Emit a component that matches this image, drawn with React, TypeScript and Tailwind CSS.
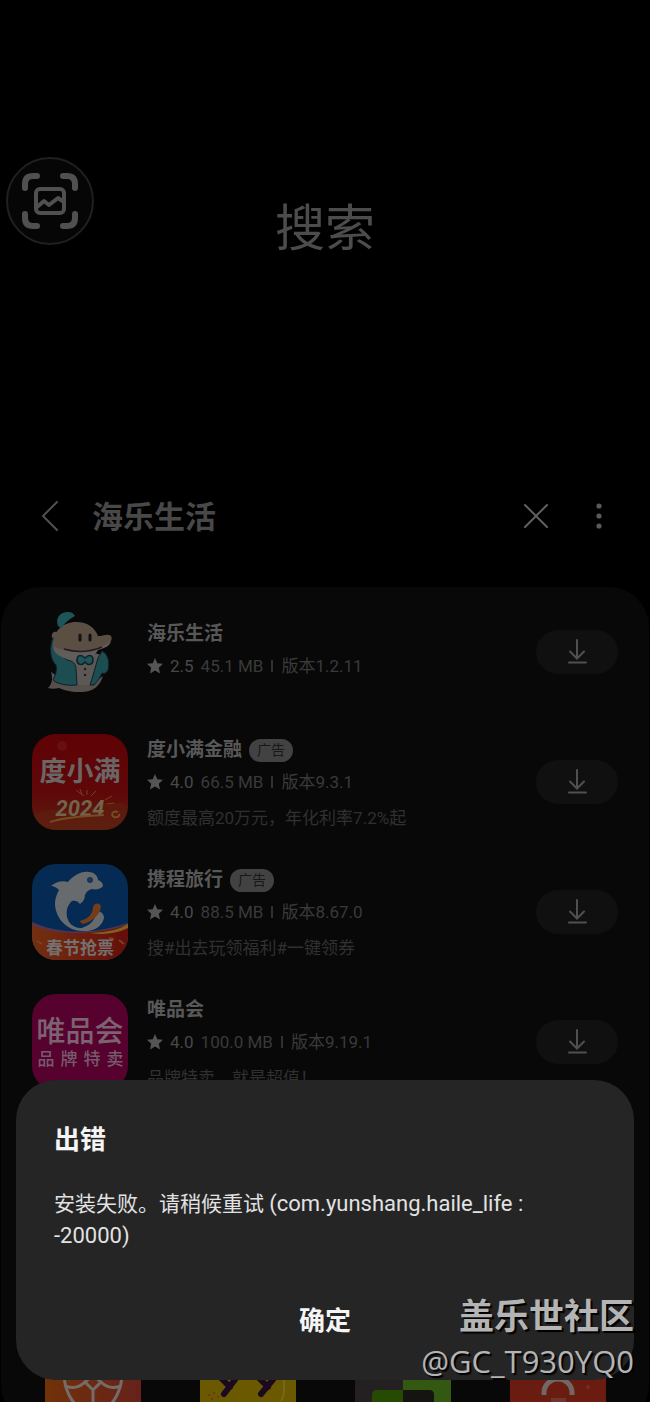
import { useState } from 'react'

type AppItem = {
  id: string
  name: string
  ad?: boolean
  rating: string
  size: string
  version: string
  desc?: string
  icon: () => React.ReactElement
}

const APPS: AppItem[] = [
  {
    id: 'haile',
    name: '海乐生活',
    rating: '2.5',
    size: '45.1 MB',
    version: '版本1.2.11',
    icon: HaileIcon,
  },
  {
    id: 'duxiaoman',
    name: '度小满金融',
    ad: true,
    rating: '4.0',
    size: '66.5 MB',
    version: '版本9.3.1',
    desc: '额度最高20万元，年化利率7.2%起',
    icon: DuxiaomanIcon,
  },
  {
    id: 'ctrip',
    name: '携程旅行',
    ad: true,
    rating: '4.0',
    size: '88.5 MB',
    version: '版本8.67.0',
    desc: '搜#出去玩领福利#一键领券',
    icon: CtripIcon,
  },
  {
    id: 'vip',
    name: '唯品会',
    rating: '4.0',
    size: '100.0 MB',
    version: '版本9.19.1',
    desc: '品牌特卖，就是超值！',
    icon: VipIcon,
  },
]

function HaileIcon() {
  return (
    <svg viewBox="0 0 96 96" className="size-24" aria-hidden="true">
      <path d="M16 84c4-4 5-9 3-16 5 3 9 6 13 8l30 2 9-6c-3 11-12 17-24 16-9 0-15-2-20-4-4 1-8 1-11 0z" fill="#55504b" />
      <path d="M34 42c-3 14-2 34 8 39h16c8-6 12-18 12-30z" fill="#5c5856" />
      <path d="M21 34c3-2 6-1 8 2-1 10 1 17 6 20 6 1 9 4 9 9l1 16c-10 1-20-1-24-5 3-5 4-11 3-15-6-5-7-18-3-27z" fill="#1c4d50" stroke="#0d1f28" strokeWidth="1" />
      <path d="M70 47c6 3 8 11 6 19-1 3-4 4-6 3-2 5-5 9-8 12H58c3-9 5-17 8-27z" fill="#1c4d50" stroke="#0d1f28" strokeWidth="1" />
      <path d="M21 41c0-14 10-23 23-23 12 0 19 6 22 14 5 0 10-3 13 0 3 5-4 10-13 13-3 7-10 10-20 10-14 0-25-4-25-14z" fill="#5b4f43" />
      <path d="M21 42c8 5 26 7 37 4 8-2 16-4 21-9-1 5-6 7-13 9-4 7-10 10-19 10-14 0-25-4-26-14z" fill="#605d5b" />
      <path d="M32 45c13 4 26 3 38-2" fill="none" stroke="#221b22" strokeWidth="1.6" />
      <path d="M20 34c-1-5 2-7 4-6s3 3 2 5z" fill="#5a5047" />
      <path d="M26 22c-3-8 2-14 10-14 4 0 6 2 7 4-6 3-10 7-14 12z" fill="#1d5558" />
      <path d="M48 31v5M58 31v5" stroke="#131118" strokeWidth="3" strokeLinecap="round" />
      <path d="M53 54c-4-4-8-3-8 2s5 6 8 2c3 4 8 3 8-2s-4-6-8-2z" fill="#205558" stroke="#10212a" strokeWidth="1.5" />
      <circle cx="53" cy="65" r="1.2" fill="#27161c" />
      <circle cx="53" cy="71" r="1.2" fill="#27161c" />
    </svg>
  )
}

function DuxiaomanIcon() {
  return (
    <svg viewBox="0 0 96 96" className="size-24 rounded-3xl" aria-hidden="true">
      <defs>
        <linearGradient id="dxm" x1="0" y1="0" x2="0" y2="1">
          <stop offset="0" stopColor="#5f0205" />
          <stop offset="0.6" stopColor="#5f0709" />
          <stop offset="1" stopColor="#59200f" />
        </linearGradient>
      </defs>
      <rect width="96" height="96" fill="url(#dxm)" />
      <circle cx="30" cy="12" r="5" fill="#661010" />
      <path d="M0 82c20-12 30-2 48-6s30-12 48-4v24H0z" fill="#60200f" opacity=".5" />
      <path d="M52 62l-8-6M50 61l-2-6M55 61v-5M59 62l5-5M73 66l7-4M75 70l7-1" stroke="#744022" strokeWidth="1" />
      <text x="48" y="47" textAnchor="middle" fontSize="27" fontWeight="700" fill="#6a6666">度小满</text>
      <text x="48" y="82" textAnchor="middle" fontSize="22" fontWeight="700" fontStyle="italic" fill="#72644a">2024</text>
      <path d="M18 88c18-6 38-6 54-7m14-3c-5-2-8 3-4 5 3 1 6-1 5-3" fill="none" stroke="#754c24" strokeWidth="2" />
    </svg>
  )
}

function CtripIcon() {
  return (
    <svg viewBox="0 0 96 96" className="size-24 rounded-3xl" aria-hidden="true">
      <defs>
        <linearGradient id="ctrip-base" x1="0" y1="0" x2="1" y2="0">
          <stop offset="0" stopColor="#733010" />
          <stop offset="1" stopColor="#650d0a" />
        </linearGradient>
      </defs>
      <rect width="96" height="96" fill="#052b55" />
      <path d="M0 58c24 11 58 14 96 1v37H0z" fill="#513454" />
      <path d="M0 61c26 11 63 10 96 0v35H0z" fill="url(#ctrip-base)" />
      <path d="M58 69c20-1 30-4 38-9v4c-12 6-25 7-38 5z" fill="#80601b" />
      {/* dolphin, tail curling round below the fin */}
      <path d="M19 22c5-4 11-6 17-4 5-6 13-11 21-10 5 0 9 4 9 8 3 1 5 3 5 6-2 3-7 4-11 3-4 1-6 3-7 6 0 4-2 7-5 9-2-3-5-4-8-3-6 5-7 14-3 21 3 4 7 6 12 6 9-2 14-8 16-16 4-1 7 2 7 6-2 9-11 14-22 13-14 0-26-12-27-26 0-7 2-11 4-15-2-2-5-4-8-4z" fill="#686b6e" />
      <path d="M61 43c2-5 8-4 8 0-1 8-9 15-18 17-2-1-3-2-3-3 8-2 13-7 13-14z" fill="#743c18" />
      <path d="M42 44c-3 9 2 17 10 20-9-1-15-11-10-20z" fill="#052b55" />
      <circle cx="58" cy="16" r="3" fill="#183456" />
      <path d="M77 74l5 1M87 76l5 4M10 80l-5-3" stroke="#754424" strokeWidth="2" />
      <text x="48" y="90" textAnchor="middle" fontSize="17" fontWeight="700" fill="#747070">春节抢票</text>
    </svg>
  )
}

function VipIcon() {
  return (
    <svg viewBox="0 0 96 96" className="size-24 rounded-3xl" aria-hidden="true">
      <rect width="96" height="96" fill="#57012f" />
      <text x="48" y="48" textAnchor="middle" fontSize="29" fontWeight="500" fill="#7b6372">唯品会</text>
      {['品', '牌', '特', '卖'].map((c, i) => (
        <text key={c} x={14 + i * 23} y="71" textAnchor="middle" fontSize="17" fontWeight="500" fill="#765b6c">
          {c}
        </text>
      ))}
    </svg>
  )
}

// row of suggested games, only their lower part shows below the dialog
const SUGGESTED = [
  <svg key="sport" viewBox="0 0 96 96" className="size-24" aria-hidden="true">
    <defs>
      <linearGradient id="sport">
        <stop offset="0" stopColor="#713108" />
        <stop offset="1" stopColor="#65221b" />
      </linearGradient>
    </defs>
    <rect width="96" height="96" fill="url(#sport)" />
    <g fill="none" stroke="#756c69" strokeWidth="3">
      <path d="M19 44c0 9 2 16 5 22 5 10 13 17 24 18 11-1 19-8 24-18 3-6 5-13 5-22" />
      <path d="M20 57c8 3 15 1 20-4M76 57c-8 3-15 1-20-4M40 53l8-7 8 7-8 8zM48 61v24" />
    </g>
  </svg>,
  <svg key="yy" viewBox="0 0 96 96" className="size-24" aria-hidden="true">
    <rect width="96" height="96" fill="#6a5901" />
    <path d="M84 48v14c0 4-1 7-3 10" stroke="#786914" strokeWidth="2" fill="none" />
    <path d="M20 48l10 10M37 48L24 65M58 48l10 10M75 48L61 65" stroke="#1b0920" strokeWidth="6" strokeLinecap="round" />
    <path d="M8 66h2M13 64h2M11 70h2M17 68h2" stroke="#70380c" strokeWidth="2" />
  </svg>,
  <svg key="blocks" viewBox="0 0 96 96" className="size-24" aria-hidden="true">
    <rect width="96" height="96" fill="#242022" />
    <rect x="48" width="48" height="96" fill="#335811" />
    <path d="M48 61H22q-5 0-5 5v30h31z" fill="#264a02" />
    <path d="M48 61h26q5 0 5 5v30H48z" fill="#151410" />
  </svg>,
  <svg key="shop" viewBox="0 0 96 96" className="size-24" aria-hidden="true">
    <rect width="96" height="96" fill="#6a1c10" />
    <path d="M34 66v-2a14 14 0 0 1 28 0v2" fill="none" stroke="#716765" strokeWidth="5" />
    <rect x="41" y="69" width="15" height="20" fill="#6d3630" />
    <circle cx="78" cy="58" r="2" fill="#75301a" />
  </svg>,
]

function DownloadIcon() {
  return (
    <svg viewBox="0 0 24 28" className="h-7 w-6" fill="none" stroke="#505050" strokeWidth="2" strokeLinecap="round" aria-hidden="true">
      <path d="M12 2v18M5 13.500l7 7 7-7M4 24.500h17" />
    </svg>
  )
}

function AppRow({ app }: { app: AppItem }) {
  const Icon = app.icon
  return (
    <li className="flex h-[130px] items-center px-[31px]">
      <Icon />
      <div className={`ml-[19px] min-w-0 flex-1 ${app.desc ? 'pt-1' : 'pb-1'}`}>
        <div className="flex h-6 items-center">
          <h3 className="text-[19px] leading-6 font-bold text-[#585858]">{app.name}</h3>
          {app.ad && (
            <span className="ml-[7px] rounded-full bg-[#424242] px-2 text-[14px] leading-[23px] text-[#181818]">
              广告
            </span>
          )}
        </div>
        <div className="mt-2 flex h-6 items-center text-[17px] leading-6 text-[#3a3a3a]">
          <svg viewBox="0 0 16 16" className="size-4" fill="#555555" aria-hidden="true">
            <path d="M8 0l2.300 5.200 5.700.6-4.200 3.900 1.200 5.800L8 12.600l-5 2.900 1.200-5.800L0 5.800l5.700-.6z" />
          </svg>
          <span className="ml-[7px] text-[#484848]">{app.rating}</span>
          <span className="ml-[7px]">{app.size}</span>
          <span className="mx-2 h-3 w-0.5 bg-[#303030]" />
          <span>{app.version}</span>
        </div>
        {app.desc && <p className="mt-3 truncate text-[17px] leading-6 text-[#303030]">{app.desc}</p>}
      </div>
      <button
        aria-label={`下载 ${app.name}`}
        className="flex h-11 w-[82px] shrink-0 items-center justify-center rounded-full bg-[#101010]"
      >
        <DownloadIcon />
      </button>
    </li>
  )
}

export default function App() {
  const [open, setOpen] = useState(true)

  return (
    <div className="relative h-screen overflow-hidden bg-black font-[Roboto,'Noto_Sans_CJK_SC',sans-serif]">
      <header className="flex h-[458px] items-center justify-center">
        <h1 className="text-[50px] text-[#4c4c4c]">搜索</h1>
      </header>

      <button
        aria-label="屏幕识图"
        className="absolute top-[157px] left-[6px] flex size-[88px] items-center justify-center rounded-full border-2 border-[#202020] bg-[#060606]"
      >
        <svg viewBox="0 0 60 60" className="size-[60px]" fill="none" stroke="#505050" strokeWidth="6" strokeLinecap="round" aria-hidden="true">
          <path d="M5 17v-4q0-8 8-8h4M43 5h4q8 0 8 8v4M55 43v4q0 8-8 8h-4M17 55h-4q-8 0-8-8v-4" />
          <rect x="16" y="18" width="28" height="24" rx="4" strokeWidth="4" />
          <path d="M17 36l7-6 5 4 9-7 6 4" strokeWidth="4" strokeLinejoin="round" />
        </svg>
      </button>

      <nav className="flex h-[115px] items-center px-9">
        <button aria-label="返回" className="flex w-7 justify-center">
          <svg viewBox="0 0 18 30" className="h-[30px] w-[18px]" fill="none" stroke="#505050" strokeWidth="2" strokeLinecap="round" aria-hidden="true">
            <path d="M16 1L2 15l14 14" />
          </svg>
        </button>
        <h2 className="ml-7 flex-1 pt-1.5 text-[31px] font-bold text-[#484848]">海乐生活</h2>
        <button aria-label="清除">
          <svg viewBox="0 0 24 24" className="size-6" stroke="#606060" strokeWidth="2" strokeLinecap="round" aria-hidden="true">
            <path d="M1 1l22 22M23 1L1 23" />
          </svg>
        </button>
        <button aria-label="更多选项" className="mr-2 ml-[44px]">
          <svg viewBox="0 0 14 26" className="h-[26px] w-[14px]" fill="#5a5a5a" aria-hidden="true">
            <circle cx="7" cy="3" r="2.600" />
            <circle cx="7" cy="13" r="2.600" />
            <circle cx="7" cy="23" r="2.600" />
          </svg>
        </button>
      </nav>

      <main className="mx-px mt-[14px] rounded-[40px] bg-[#080808]">
        <ul>
          {APPS.map((app) => (
            <AppRow key={app.id} app={app} />
          ))}
        </ul>
        <div className="mt-[222px] grid grid-cols-4 justify-items-center px-[14px]">{SUGGESTED}</div>
      </main>

      {open && (
        <div
          role="dialog"
          aria-labelledby="error-title"
          className="absolute inset-x-4 bottom-[22px] rounded-[40px] bg-[#252525] px-[38px] pt-11 pb-9"
        >
          <h2 id="error-title" className="text-[26px] leading-8 font-bold text-[#f5f5f5]">
            出错
          </h2>
          <p className="mt-8 pr-5 text-[21px] leading-8 text-[#e2e2e2]">
            安装失败。请稍候重试 <span className="text-[22px]">(com.yunshang.haile_life :</span>{' '}
            <span className="text-[22px]">-20000)</span>
          </p>
          <div className="mt-[46px] flex justify-center">
            <button onClick={() => setOpen(false)} className="px-8 text-[26px] leading-[46px] font-bold text-[#f5f5f5]">
              确定
            </button>
          </div>
        </div>
      )}

      <div className="pointer-events-none absolute right-4 bottom-[18px] text-right text-[#b4b4b4] [text-shadow:2px_2px_1px_#000]">
        <p className="text-[35px] leading-10 font-bold">盖乐世社区</p>
        <p className="font-['Open_Sans',sans-serif] text-[31px] leading-[46px]">@GC_T930YQ0</p>
      </div>
    </div>
  )
}
